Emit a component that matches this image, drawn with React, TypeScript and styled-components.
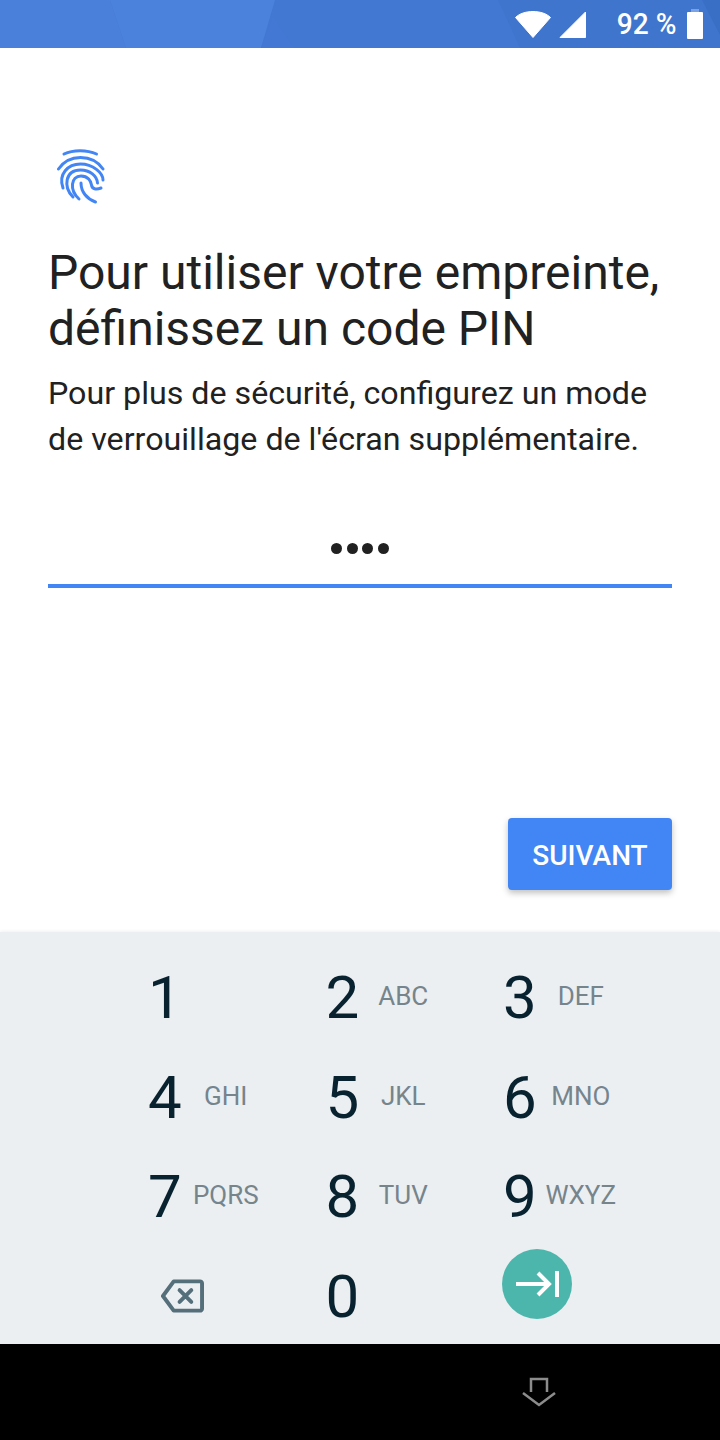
import React from "react";
import styled, { createGlobalStyle } from "styled-components";

const GlobalStyle = createGlobalStyle`
  html, body { margin: 0; padding: 0; background: #fff; }
  body { font-family: Roboto, "Liberation Sans", sans-serif; }
`;

const Screen = styled.div`
  width: 720px;
  height: 1440px;
  display: flex;
  flex-direction: column;
  overflow: hidden;
  background: #fff;
`;

const StatusBar = styled.header`
  position: relative;
  flex: 0 0 48px;
  display: flex;
  align-items: center;
  justify-content: flex-end;
  padding-right: 17px;
  background: #4278d2;
  color: #fff;
`;

const Facets = styled.svg`
  position: absolute;
  inset: 0;
`;

const StatusIcon = styled.svg<{ $gap?: number }>`
  position: relative;
  display: block;
  margin-right: ${(p) => p.$gap ?? 0}px;
`;

const Battery = styled.span`
  position: relative;
  font-size: 29px;
  font-weight: 500;
  line-height: 48px;
  margin-right: 10px;
  transform: scaleX(0.97);
  transform-origin: right center;
`;

const Main = styled.main`
  flex: 1;
  display: flex;
  flex-direction: column;
  padding: 101px 48px 0;
`;

const Print = styled.svg`
  display: block;
  margin-left: 9px;
`;

const Title = styled.h1`
  margin: 40px 0 0;
  font-size: 48px;
  font-weight: 400;
  line-height: 56px;
  color: #212121;
`;

const Subtitle = styled.p`
  margin: 13px 0 0;
  font-size: 32.2px;
  font-weight: 400;
  line-height: 46px;
  color: #212121;
`;

const PinField = styled.div`
  margin-top: 50px;
  height: 72px;
  border-bottom: 4px solid #4285f4;
  display: flex;
  align-items: center;
  justify-content: center;
  gap: 4.5px;
`;

const PinDot = styled.span`
  width: 11px;
  height: 11px;
  border-radius: 50%;
  background: #212121;
`;

const Actions = styled.div`
  margin-top: 230px;
  display: flex;
  justify-content: flex-end;
`;

const NextButton = styled.button`
  width: 164px;
  height: 72px;
  border: 0;
  border-radius: 4px;
  padding: 2px 0 0;
  background: #4285f4;
  color: #fff;
  font-family: inherit;
  font-size: 28px;
  font-weight: 500;
  box-shadow: 0 3px 6px rgba(0, 0, 0, 0.25);
`;

const Keypad = styled.section`
  flex: 0 0 412px;
  min-height: 0;
  background: #ebeff2;
  box-shadow: 0 -1px 3px rgba(0, 0, 0, 0.06);
  display: grid;
  grid-template-columns: repeat(3, 177.5px);
  grid-auto-rows: 99.5px;
  justify-content: start;
  padding: 16px 0 0 128.75px;
  box-sizing: border-box;
`;

const Key = styled.div`
  display: grid;
  grid-template-columns: 72px 50px;
  align-items: center;
  justify-items: center;
`;

const Digit = styled.span`
  font-size: 60px;
  line-height: 99px;
  color: #082230;
`;

const Letters = styled.span`
  font-size: 26px;
  line-height: 99px;
  color: #76848c;
  margin-top: -2px;
`;

const BackIcon = styled.svg`
  margin-left: 35px;
`;

const GoButton = styled.div`
  width: 70px;
  height: 70px;
  border-radius: 50%;
  background: #4db6ac;
  display: flex;
  align-items: center;
  justify-content: center;
  margin: -25px 0 0 35px;
`;

const NavBar = styled.footer`
  position: relative;
  flex: 0 0 96px;
  background: #000;
  display: flex;
  justify-content: flex-end;
  align-items: center;
  padding-right: 164px;
`;

const keys: [string, string][] = [
  ["1", ""], ["2", "ABC"], ["3", "DEF"],
  ["4", "GHI"], ["5", "JKL"], ["6", "MNO"],
  ["7", "PQRS"], ["8", "TUV"], ["9", "WXYZ"],
];

export default function App() {
  return (
    <Screen>
      <GlobalStyle />
      <StatusBar>
        <Facets width="720" height="48" viewBox="0 0 720 48">
          <polygon points="0,0 110,0 126,48 0,48" fill="#4a80d9" />
          <polygon points="110,0 275,0 261,48 126,48" fill="#4b82dc" />
          <polygon points="273,16 261,48 294,48" fill="#4379d4" />
          <polygon points="498,0 720,0 720,48 520,48" fill="#3f75cd" />
          <polygon points="702,0 720,0 720,35" fill="#3a6fc6" />
        </Facets>
        <StatusIcon $gap={8} width="36" height="27" viewBox="0 0 36 27">
          <path d="M0.500 6.500C4.500 2.500 11 0.500 18 0.500S31.500 2.500 35.500 6.500L18 26.500Z" fill="#fff" stroke="#fff" strokeWidth="1" strokeLinejoin="round" />
        </StatusIcon>
        <StatusIcon $gap={29} width="27" height="27" viewBox="0 0 27 27">
          <path d="M26.500 1V26.500H1Z" fill="#fff" stroke="#fff" strokeLinejoin="round" />
        </StatusIcon>
        <Battery>92 %</Battery>
        <StatusIcon width="16" height="30" viewBox="0 0 16 30">
          <rect x="4" y="0" width="8" height="4" fill="#7ba2e3" />
          <rect x="0" y="3" width="16" height="27" rx="1" fill="#fff" />
        </StatusIcon>
      </StatusBar>
      <Main>
        <Print width="48" height="56" viewBox="0 0 48 56" fill="none" stroke="#4285f4" strokeWidth="3" strokeLinecap="round">
          <path d="M7 5C16 0.500 30 0.500 39.500 5" />
          <path d="M1.500 20C7 12 15 8.500 23.500 8.500S40.500 12 46 20" />
          <path d="M6 39C1 25 11 15 23.500 15S46 24 46 31" />
          <path d="M16 48C6 38 8 21 23.500 21C33 21 40 27 40.500 34" />
          <path d="M22 50C12 41 14 27 24 27C31 27 34 32 34.500 36C35 40 39 41 44 39" />
          <path d="M24 34C24 43 30 50 38.500 53" />
        </Print>
        <Title>Pour utiliser votre empreinte,<br />définissez un code PIN</Title>
        <Subtitle>Pour plus de sécurité, configurez un mode<br />de verrouillage de l'écran supplémentaire.</Subtitle>
        <PinField>
          <PinDot /><PinDot /><PinDot /><PinDot />
        </PinField>
        <Actions>
          <NextButton>SUIVANT</NextButton>
        </Actions>
      </Main>
      <Keypad>
        {keys.map(([d, l]) => (
          <Key key={d}>
            <Digit>{d}</Digit>
            <Letters>{l}</Letters>
          </Key>
        ))}
        <Key>
          <BackIcon width="43" height="34" viewBox="0 0 44 34" fill="none" stroke="#546e7a" strokeWidth="4" strokeLinejoin="round" strokeLinecap="round">
            <path d="M13 2H40C41 2 42 3 42 4V30C42 31 41 32 40 32H13L2 17Z" />
            <path d="M19 11L31 23M31 11L19 23" />
          </BackIcon>
          <span />
        </Key>
        <Key>
          <Digit>0</Digit>
          <span />
        </Key>
        <Key>
          <GoButton>
            <svg width="44" height="28" viewBox="0 0 44 28" fill="none" stroke="#fff" strokeWidth="4">
              <path d="M1 14H34M23 3L34 14L23 25" />
              <path d="M42 1V27" />
            </svg>
          </GoButton>
          <span />
        </Key>
      </Keypad>
      <NavBar>
        <svg width="34" height="30" viewBox="0 0 34 30" fill="none" stroke="#8c8c8c" strokeWidth="2.500">
          <path d="M9 15V2H25V15" />
          <path d="M1 16L17 28L33 16" />
        </svg>
      </NavBar>
    </Screen>
  );
}
